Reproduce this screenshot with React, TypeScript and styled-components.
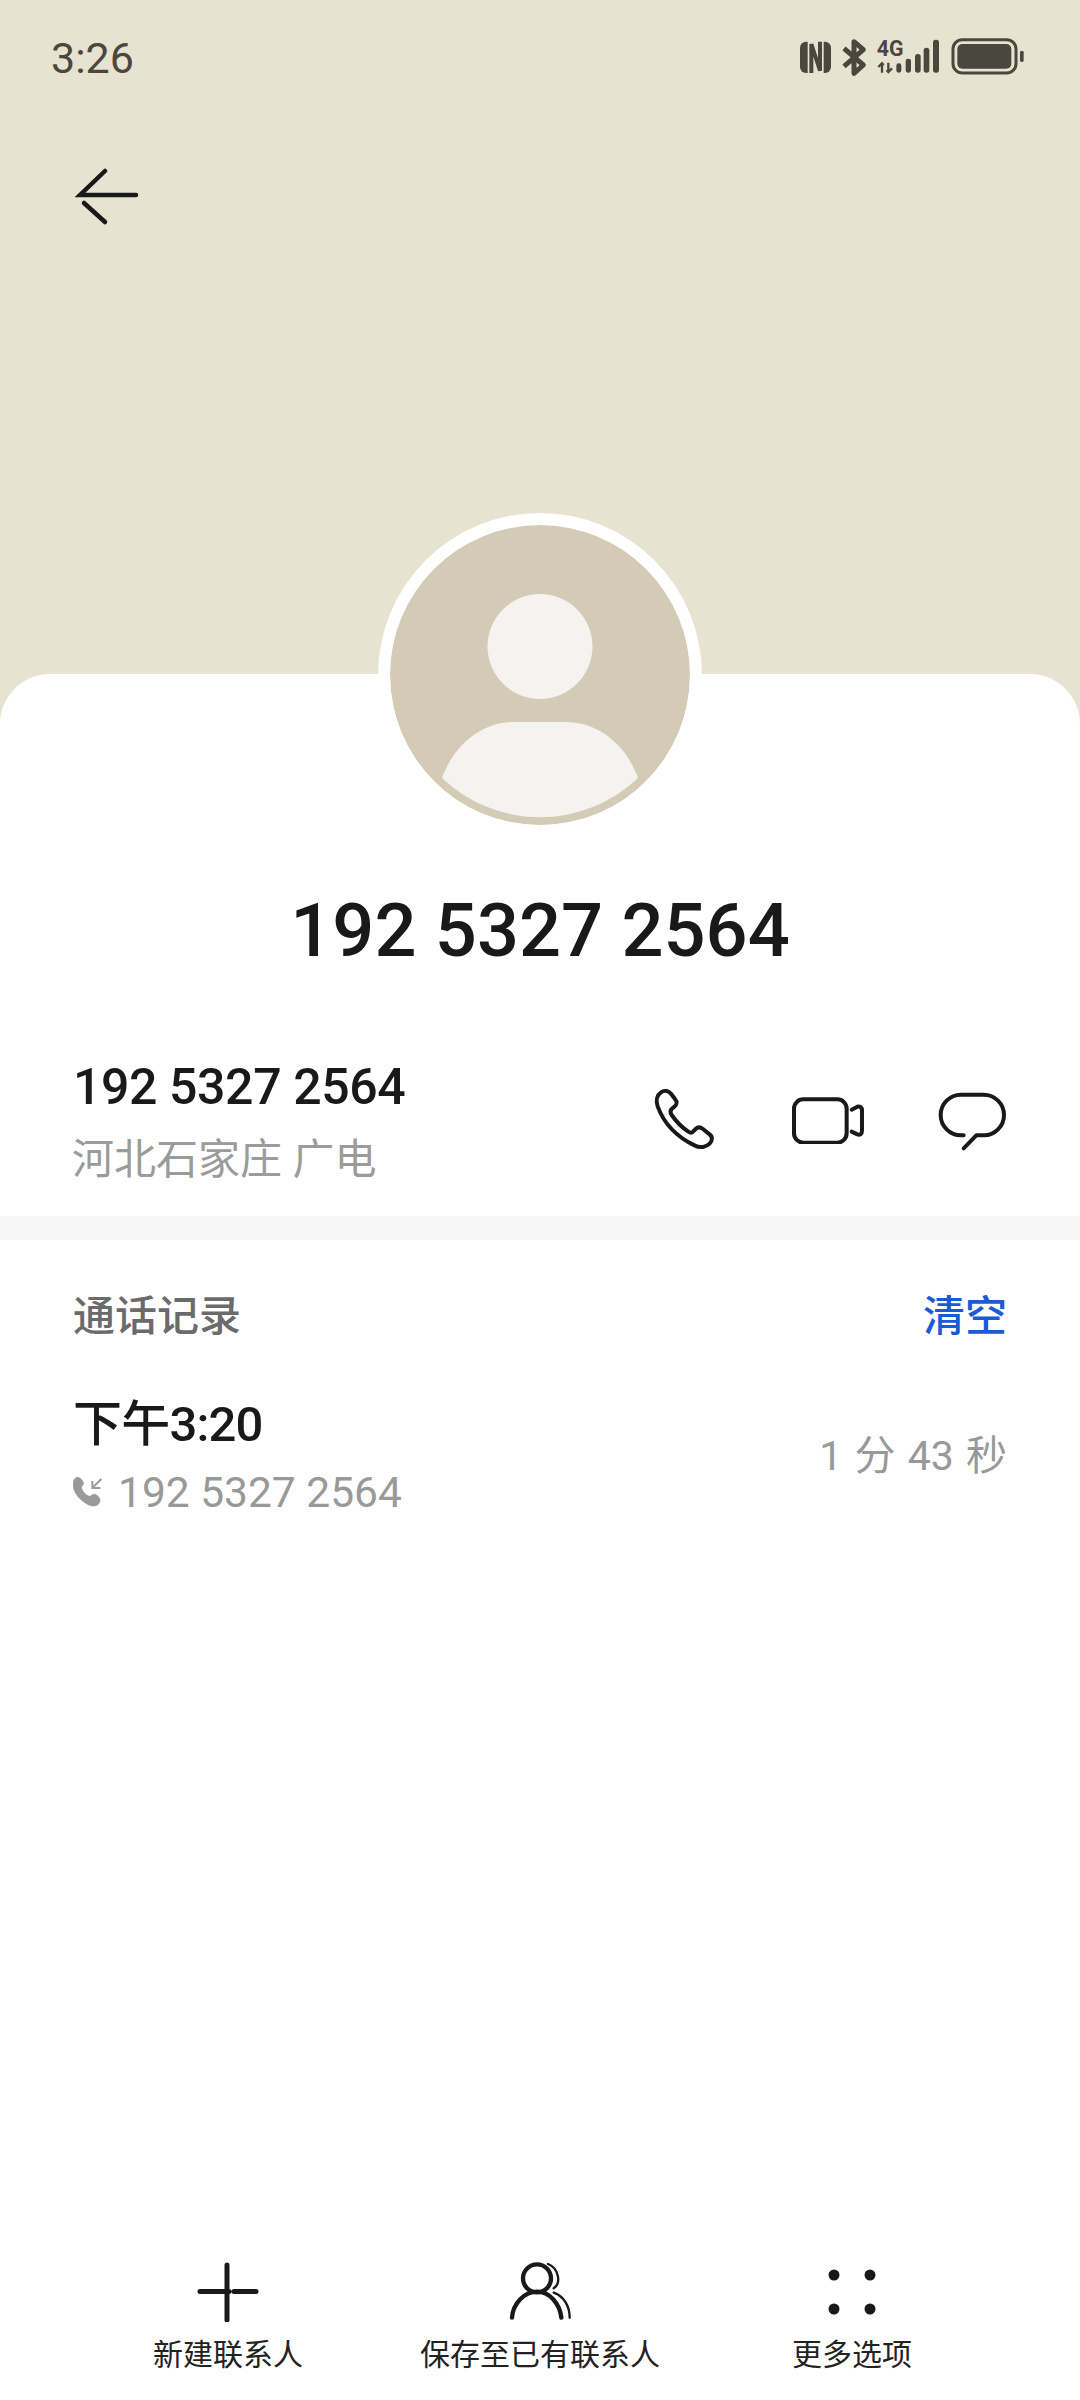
import React from 'react';
import styled, { createGlobalStyle } from 'styled-components';

const GlobalStyle = createGlobalStyle`
  html, body {
    margin: 0;
    padding: 0;
    background: #ffffff;
  }
  body {
    font-family: Roboto, "Noto Sans CJK SC", sans-serif;
  }
`;

const Page = styled.div`
  width: 1080px;
  height: 2400px;
  display: flex;
  flex-direction: column;
  overflow: hidden;
  background: #ffffff;
`;

const Hero = styled.header`
  height: 724px;
  flex: none;
  background: #e8e2d1;
`;

const StatusBar = styled.div`
  height: 96px;
  padding: 20px 40px 0 51px;
  display: flex;
  justify-content: space-between;
  align-items: flex-start;
`;

const Clock = styled.span`
  font-size: 43px;
  line-height: 76px;
  color: #4a473e;
`;

const BackButton = styled.button`
  display: block;
  margin: 51px 0 0 75px;
  padding: 0;
  width: 72px;
  height: 64px;
  border: 0;
  background: none;
`;

const Card = styled.main`
  flex: 1;
  margin-top: -50px;
  position: relative;
  display: flex;
  flex-direction: column;
  background: #ffffff;
  border-radius: 50px 50px 0 0;
`;

const Avatar = styled.div`
  align-self: center;
  width: 300px;
  height: 300px;
  margin-top: -161px;
  flex: none;
  border: 12px solid #ffffff;
  border-bottom-color: transparent;
  border-radius: 50%;
  background: #d3cbb5;
  background-clip: padding-box;

  svg {
    display: block;
  }
`;

const Title = styled.h1`
  margin: 49px 0 0;
  text-align: center;
  font-size: 74px;
  line-height: 90px;
  font-weight: 500;
  color: #191919;
`;

const ContactRow = styled.section`
  margin-top: 81px;
  padding: 0 71px 0 73px;
  height: 159px;
  display: flex;
  justify-content: space-between;
  align-items: flex-start;
`;

const ContactInfo = styled.div`
  display: flex;
  flex-direction: column;
  gap: 13px;
`;

const Number = styled.div`
  font-size: 50px;
  line-height: 60px;
  font-weight: 500;
  letter-spacing: -0.4px;
  color: #191919;
`;

const Place = styled.div`
  font-size: 42px;
  line-height: 60px;
  color: #9b9b9b;
  margin-left: -1px;
`;

const Actions = styled.div`
  display: flex;
  align-items: center;
  gap: 70px;
  margin-top: 31px;
`;

const Divider = styled.div`
  height: 24px;
  flex: none;
  background: #f6f6f6;
`;

const SectionHead = styled.div`
  margin-top: 47px;
  padding: 0 73px;
  display: flex;
  justify-content: space-between;
  font-size: 42px;
  line-height: 60px;
`;

const SectionTitle = styled.span`
  color: #6b6b6b;
  font-weight: 500;
`;

const ClearLink = styled.span`
  color: #1a5ad4;
  font-weight: 500;
`;

const CallRow = styled.div`
  margin-top: 48px;
  padding: 0 73px;
  display: flex;
  justify-content: space-between;
  align-items: center;
`;

const CallInfo = styled.div`
  display: flex;
  flex-direction: column;
  gap: 8px;
`;

const CallTime = styled.div`
  font-size: 49px;
  line-height: 60px;
  font-weight: 500;
  letter-spacing: -0.8px;
  color: #191919;
`;

const CallNumber = styled.div`
  display: flex;
  align-items: center;
  gap: 13px;
  font-size: 42.500px;
  line-height: 60px;
  color: #999999;
`;

const Duration = styled.div`
  font-size: 41px;
  line-height: 60px;
  color: #999999;
  word-spacing: 2px;
  margin-top: -6px;
`;

const BottomBar = styled.nav`
  margin-top: auto;
  padding: 0 72px 25px;
  display: grid;
  grid-template-columns: repeat(3, 312px);
`;

const BarItem = styled.div`
  display: flex;
  flex-direction: column;
  align-items: center;
  gap: 13px;
  font-size: 30px;
  line-height: 40px;
  color: #222222;
  white-space: nowrap;
`;

const ink = '#191919';
const status = '#4a473e';

const StatusIcons = () => (
  <svg width={280} height={70} viewBox="0 0 840 210" fill="none">
    <rect x={120} y={65} width={93} height={94} rx={18} fill={status} />
    <rect x={143} y={60} width={48} height={104} fill="#e8e2d1" />
    <path d="M154 159V72l26 80V65" stroke={status} strokeWidth={12} />
    <path d="M252 85l58 50-28 25V65l28 24-58 50" stroke={status} strokeWidth={15} strokeLinejoin="round" />
    <text x={350} y={109} fontFamily="Roboto" fontWeight={700} fontSize={64} fill={status}>4G</text>
    <path d="M366 158v-28M355 141l11-11 5 6M385 128v28M396 145l-11 11-5-6" stroke={status} strokeWidth={7} />
    <rect x={409} y={130} width={15} height={28} rx={7} fill={status} />
    <rect x={437} y={116} width={16} height={42} rx={7} fill={status} />
    <rect x={465} y={102} width={17} height={56} rx={8} fill={status} />
    <rect x={491} y={83} width={17} height={75} rx={8} fill={status} />
    <rect x={519} y={59} width={18} height={99} rx={8} fill={status} />
    <rect x={579} y={59} width={189} height={100} rx={28} stroke={status} strokeWidth={9} />
    <rect x={592} y={72} width={162} height={74} rx={15} fill={status} />
    <rect x={780} y={92} width={11} height={34} rx={5} fill={status} />
  </svg>
);

const BackIcon = () => (
  <svg width={72} height={64} viewBox="0 0 72 64" fill="none" stroke={ink} strokeWidth={4.5} strokeLinecap="round">
    <path d="M30 4L5 28h56" />
    <path d="M9 36l21 19" />
  </svg>
);

const PersonPlaceholder = () => (
  <svg width={300} height={300} viewBox="0 0 300 300" fill="#f4f3ef">
    <circle cx={150} cy={121.5} r={52.5} />
    <path d="M52 253C66 215 96 197 124 197h52c28 0 58 18 72 56A142 142 0 0 1 52 253z" />
  </svg>
);

const PhoneIcon = () => (
  <svg width={67.300} height={64} viewBox="98 85 202 192" fill="none" stroke={ink} strokeWidth={12} strokeLinejoin="round">
    <path d="M122 98c10-8 22-4 30 4l12 16c8 10 6 16-2 23l-8 7c-6 6-4 12 0 18 14 20 32 38 50 50 6 4 12 4 16-2l6-6c6-6 14-6 22 0l20 16c10 8 8 20 0 28-10 10-28 14-44 6-54-26-94-68-112-118-6-18-2-34 10-42z" />
  </svg>
);

const VideoIcon = () => (
  <svg width={76.670} height={48} viewBox="510 105 230 144" fill="none" stroke={ink} strokeWidth={12} strokeLinejoin="round" strokeLinecap="round">
    <rect x={522} y={115} width={158} height={130} rx={28} />
    <path d="M695 146l17-9c8-3 14 3 14 11v62c0 8-6 14-14 10l-17-8" />
  </svg>
);

const BubbleIcon = () => (
  <svg width={72} height={64} viewBox="950 84 216 192" fill="none" stroke={ink} strokeWidth={12} strokeLinecap="round" strokeLinejoin="round">
    <path d="M1030 226h-8a60 60 0 0 1 0-122h68a61 61 0 0 1 0 122h-22l-38 39" />
  </svg>
);

const IncomingIcon = () => (
  <svg width={32} height={32} viewBox="75 618 96 96" fill="none" stroke="#999999">
    <path d="M84 620c9-4 18 4 22 15 2 8-7 10-6 16 4 11 13 21 23 25 6 1 9-7 16-6 11 2 20 13 16 24-6 13-22 13-34 7-27-13-44-36-46-59 0-10 3-19 9-22z" fill="#999999" strokeWidth={2} />
    <path d="M160 624l-26 26M133 630v21h24" strokeWidth={6} />
  </svg>
);

const PlusIcon = () => (
  <svg width={62} height={60} viewBox="0 0 62 60" fill="none" stroke={ink} strokeWidth={5} strokeLinecap="round">
    <path d="M30 3v55M3 29.500h29M37 29.500h22" />
  </svg>
);

const ContactsIcon = () => (
  <svg width={62} height={60} viewBox="88 36 186 180" fill="none" stroke={ink} strokeLinecap="round">
    <circle cx={172} cy={85} r={42} strokeWidth={13} />
    <path d="M97 203c3-43 38-78 75-78s68 35 73 78" strokeWidth={13} />
    <path d="M205 42c33 13 40 58 17 73M222 128c33 12 48 42 48 75" strokeWidth={7} />
  </svg>
);

const DotsIcon = () => (
  <svg width={62} height={60} viewBox="0 0 62 60" fill={ink}>
    <circle cx={13} cy={13} r={5.500} />
    <circle cx={49} cy={13} r={5.500} />
    <circle cx={13} cy={47} r={5.500} />
    <circle cx={49} cy={47} r={5.500} />
  </svg>
);

const App: React.FC = () => {
  return (
    <Page>
      <GlobalStyle />
      <Hero>
        <StatusBar>
          <Clock>3:26</Clock>
          <StatusIcons />
        </StatusBar>
        <BackButton>
          <BackIcon />
        </BackButton>
      </Hero>
      <Card>
        <Avatar>
          <PersonPlaceholder />
        </Avatar>
        <Title>192 5327 2564</Title>
        <ContactRow>
          <ContactInfo>
            <Number>192 5327 2564</Number>
            <Place>河北石家庄 广电</Place>
          </ContactInfo>
          <Actions>
            <PhoneIcon />
            <VideoIcon />
            <BubbleIcon />
          </Actions>
        </ContactRow>
        <Divider />
        <SectionHead>
          <SectionTitle>通话记录</SectionTitle>
          <ClearLink>清空</ClearLink>
        </SectionHead>
        <CallRow>
          <CallInfo>
            <CallTime>下午3:20</CallTime>
            <CallNumber>
              <IncomingIcon />
              192 5327 2564
            </CallNumber>
          </CallInfo>
          <Duration>1 分 43 秒</Duration>
        </CallRow>
        <BottomBar>
          <BarItem>
            <PlusIcon />
            新建联系人
          </BarItem>
          <BarItem>
            <ContactsIcon />
            保存至已有联系人
          </BarItem>
          <BarItem>
            <DotsIcon />
            更多选项
          </BarItem>
        </BottomBar>
      </Card>
    </Page>
  );
};

export default App;
